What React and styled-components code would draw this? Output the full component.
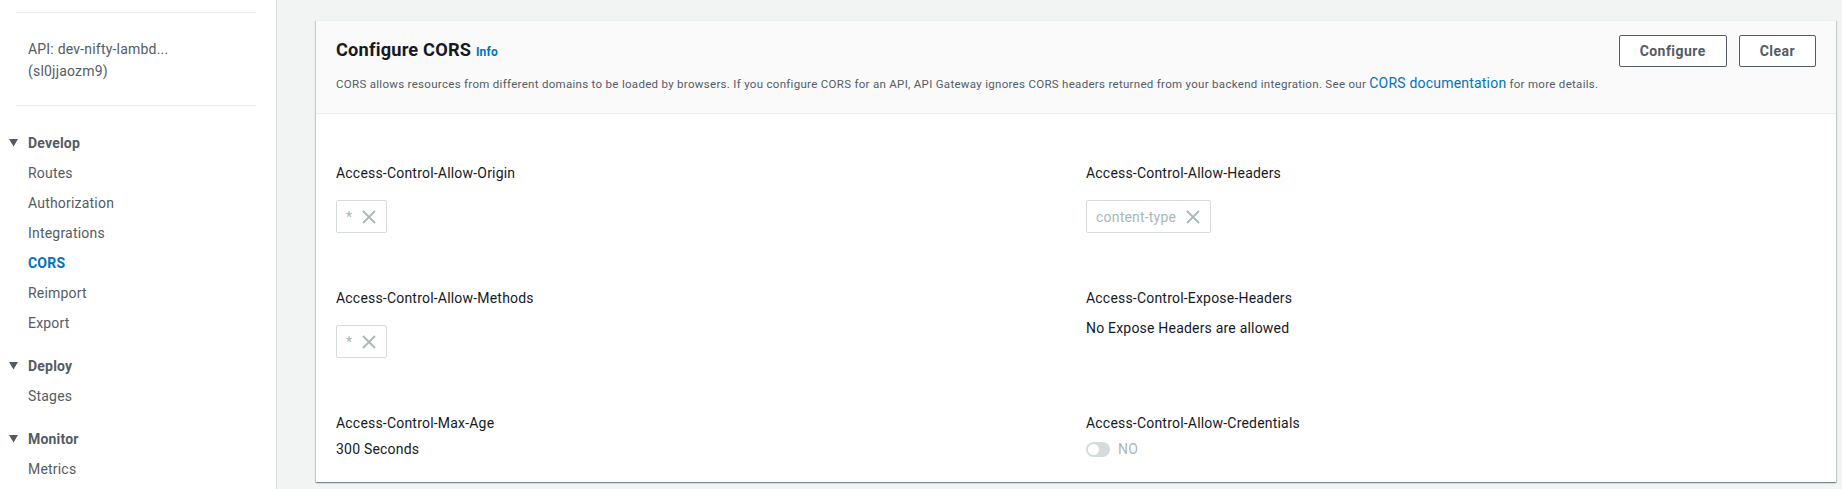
import styled, { createGlobalStyle } from "styled-components";

const GlobalStyle = createGlobalStyle`
  body {
    margin: 0;
    font-family: Roboto, "Liberation Sans", Arial, sans-serif;
    background: #f2f3f3;
    color: #16191f;
    letter-spacing: 0.2px;
  }
  * { box-sizing: border-box; }
`;

const sections = [
  {
    title: "Develop",
    items: ["Routes", "Authorization", "Integrations", "CORS", "Reimport", "Export"],
  },
  { title: "Deploy", items: ["Stages"] },
  { title: "Monitor", items: ["Metrics"] },
];

const XIcon = () => (
  <svg width="14" height="14" viewBox="0 0 14 14">
    <path d="M1 1l12 12M13 1L1 13" stroke="#aab7b8" strokeWidth="1.8" fill="none" />
  </svg>
);

const Caret = () => (
  <svg width="9" height="8" viewBox="0 0 9 8">
    <path d="M0 0h9L4.5 7.5z" fill="#545b64" />
  </svg>
);

const Token = ({ value }) => (
  <TokenBox>
    <span>{value}</span>
    <XIcon />
  </TokenBox>
);

const App = () => {
  return (
    <Page>
      <GlobalStyle />
      <Sidebar>
        <Divider />
        <ApiName>
          API: dev-nifty-lambd...
          <br />
          (sl0jjaozm9)
        </ApiName>
        <Divider $top={23} />
        {sections.map((s, i) => (
          <Section key={s.title} $first={i === 0}>
            <SectionHeader>
              <Caret />
              {s.title}
            </SectionHeader>
            {s.items.map((item) => (
              <NavItem key={item} $active={item === "CORS"}>
                {item}
              </NavItem>
            ))}
          </Section>
        ))}
      </Sidebar>

      <Main>
        <Card>
          <CardHeader>
            <TitleRow>
              <Title>
                Configure CORS <InfoLink>Info</InfoLink>
              </Title>
              <Actions>
                <Button>Configure</Button>
                <Button>Clear</Button>
              </Actions>
            </TitleRow>
            <Description>
              CORS allows resources from different domains to be loaded by browsers. If you
              configure CORS for an API, API Gateway ignores CORS headers returned from your
              backend integration. See our <DocLink>CORS documentation</DocLink> for more details.
            </Description>
          </CardHeader>

          <CardBody>
            <Field>
              <Label>Access-Control-Allow-Origin</Label>
              <TokenList>
                <Token value="*" />
              </TokenList>
            </Field>
            <Field>
              <Label>Access-Control-Allow-Headers</Label>
              <TokenList>
                <Token value="content-type" />
              </TokenList>
            </Field>
            <Field>
              <Label>Access-Control-Allow-Methods</Label>
              <TokenList>
                <Token value="*" />
              </TokenList>
            </Field>
            <Field>
              <Label>Access-Control-Expose-Headers</Label>
              <Value $gap={8}>No Expose Headers are allowed</Value>
            </Field>
            <Field>
              <Label>Access-Control-Max-Age</Label>
              <Value $gap={4}>300 Seconds</Value>
            </Field>
            <Field>
              <Label>Access-Control-Allow-Credentials</Label>
              <ToggleRow>
                <Toggle />
                <ToggleText>NO</ToggleText>
              </ToggleRow>
            </Field>
          </CardBody>
        </Card>
      </Main>
    </Page>
  );
};

const Page = styled.div`
  display: flex;
  height: 489px;
  overflow: hidden;
`;

const Sidebar = styled.nav`
  width: 277px;
  flex-shrink: 0;
  background: #fff;
  border-right: 1px solid #d5dbdb;
  padding-top: 12px;
`;

const Divider = styled.div`
  height: 1px;
  background: #eaeded;
  margin: ${(p) => p.$top || 0}px 20px 0 16px;
`;

const ApiName = styled.div`
  margin-top: 25px;
  padding-left: 28px;
  font-size: 14px;
  line-height: 22px;
  color: #545b64;
`;

const Section = styled.div`
  margin-top: ${(p) => (p.$first ? 21 : 12)}px;
`;

const SectionHeader = styled.div`
  display: flex;
  align-items: center;
  height: 31px;
  padding-left: 9px;
  gap: 10px;
  font-size: 14px;
  font-weight: 700;
  color: #545b64;
`;

const NavItem = styled.div`
  height: 30px;
  line-height: 30px;
  padding-left: 28px;
  font-size: 14px;
  color: ${(p) => (p.$active ? "#0073bb" : "#545b64")};
  font-weight: ${(p) => (p.$active ? 700 : 400)};
`;

const Main = styled.main`
  flex: 1;
  padding: 20px 6px 0 39px;
`;

const Card = styled.section`
  background: #fff;
  border-top: 1px solid #eaeded;
  box-shadow: 0 1px 1px 0 rgba(0, 28, 36, 0.3), 1px 1px 1px 0 rgba(0, 28, 36, 0.15),
    -1px 1px 1px 0 rgba(0, 28, 36, 0.15);
`;

const CardHeader = styled.div`
  background: #fafafa;
  border-bottom: 1px solid #eaeded;
  padding: 14px 20px 21px 20px;
`;

const TitleRow = styled.div`
  display: flex;
  justify-content: space-between;
  align-items: center;
  height: 32px;
`;

const Title = styled.h2`
  margin: 0;
  font-size: 18.2px;
  font-weight: 700;
  color: #16191f;
  line-height: 32px;
`;

const InfoLink = styled.span`
  font-size: 12px;
  font-weight: 700;
  color: #0073bb;
`;

const Actions = styled.div`
  display: flex;
  gap: 12px;
`;

const Button = styled.button`
  height: 32px;
  padding: 0 20px;
  background: #fff;
  border: 1px solid #545b64;
  border-radius: 2px;
  font-family: inherit;
  font-size: 14px;
  font-weight: 700;
  letter-spacing: 0.45px;
  color: #545b64;
`;

const Description = styled.p`
  margin: 8px 0 0;
  font-size: 11.5px;
  line-height: 16px;
  letter-spacing: 0.3px;
  color: #545b64;
`;

const DocLink = styled.a`
  font-size: 14px;
  letter-spacing: 0.2px;
  color: #0073bb;
`;

const CardBody = styled.div`
  display: grid;
  grid-template-columns: 1fr 1fr;
  gap: 54px 20px;
  padding: 48px 20px 22px;
`;

const Field = styled.div``;

const Label = styled.div`
  font-size: 14px;
  line-height: 22px;
  color: #16191f;
`;

const TokenList = styled.div`
  display: flex;
  margin-top: 16px;
`;

const TokenBox = styled.div`
  display: inline-flex;
  align-items: center;
  gap: 10px;
  height: 33px;
  padding: 0 10px 0 9px;
  border: 1px solid #d5dbdb;
  border-radius: 2px;
  font-size: 14px;
  color: #aab7b8;
`;

const Value = styled.div`
  margin-top: ${(p) => p.$gap}px;
  font-size: 14px;
  line-height: 22px;
  color: #16191f;
`;

const ToggleRow = styled.div`
  display: flex;
  align-items: center;
  height: 22px;
  margin-top: 4px;
`;

const Toggle = styled.span`
  position: relative;
  width: 24px;
  height: 15px;
  border-radius: 8px;
  background: #d5dbdb;

  &::after {
    content: "";
    position: absolute;
    left: 2px;
    top: 2px;
    width: 11px;
    height: 11px;
    border-radius: 50%;
    background: #fff;
  }
`;

const ToggleText = styled.span`
  margin-left: 8px;
  font-size: 14px;
  color: #aab7b8;
`;

export default App;
